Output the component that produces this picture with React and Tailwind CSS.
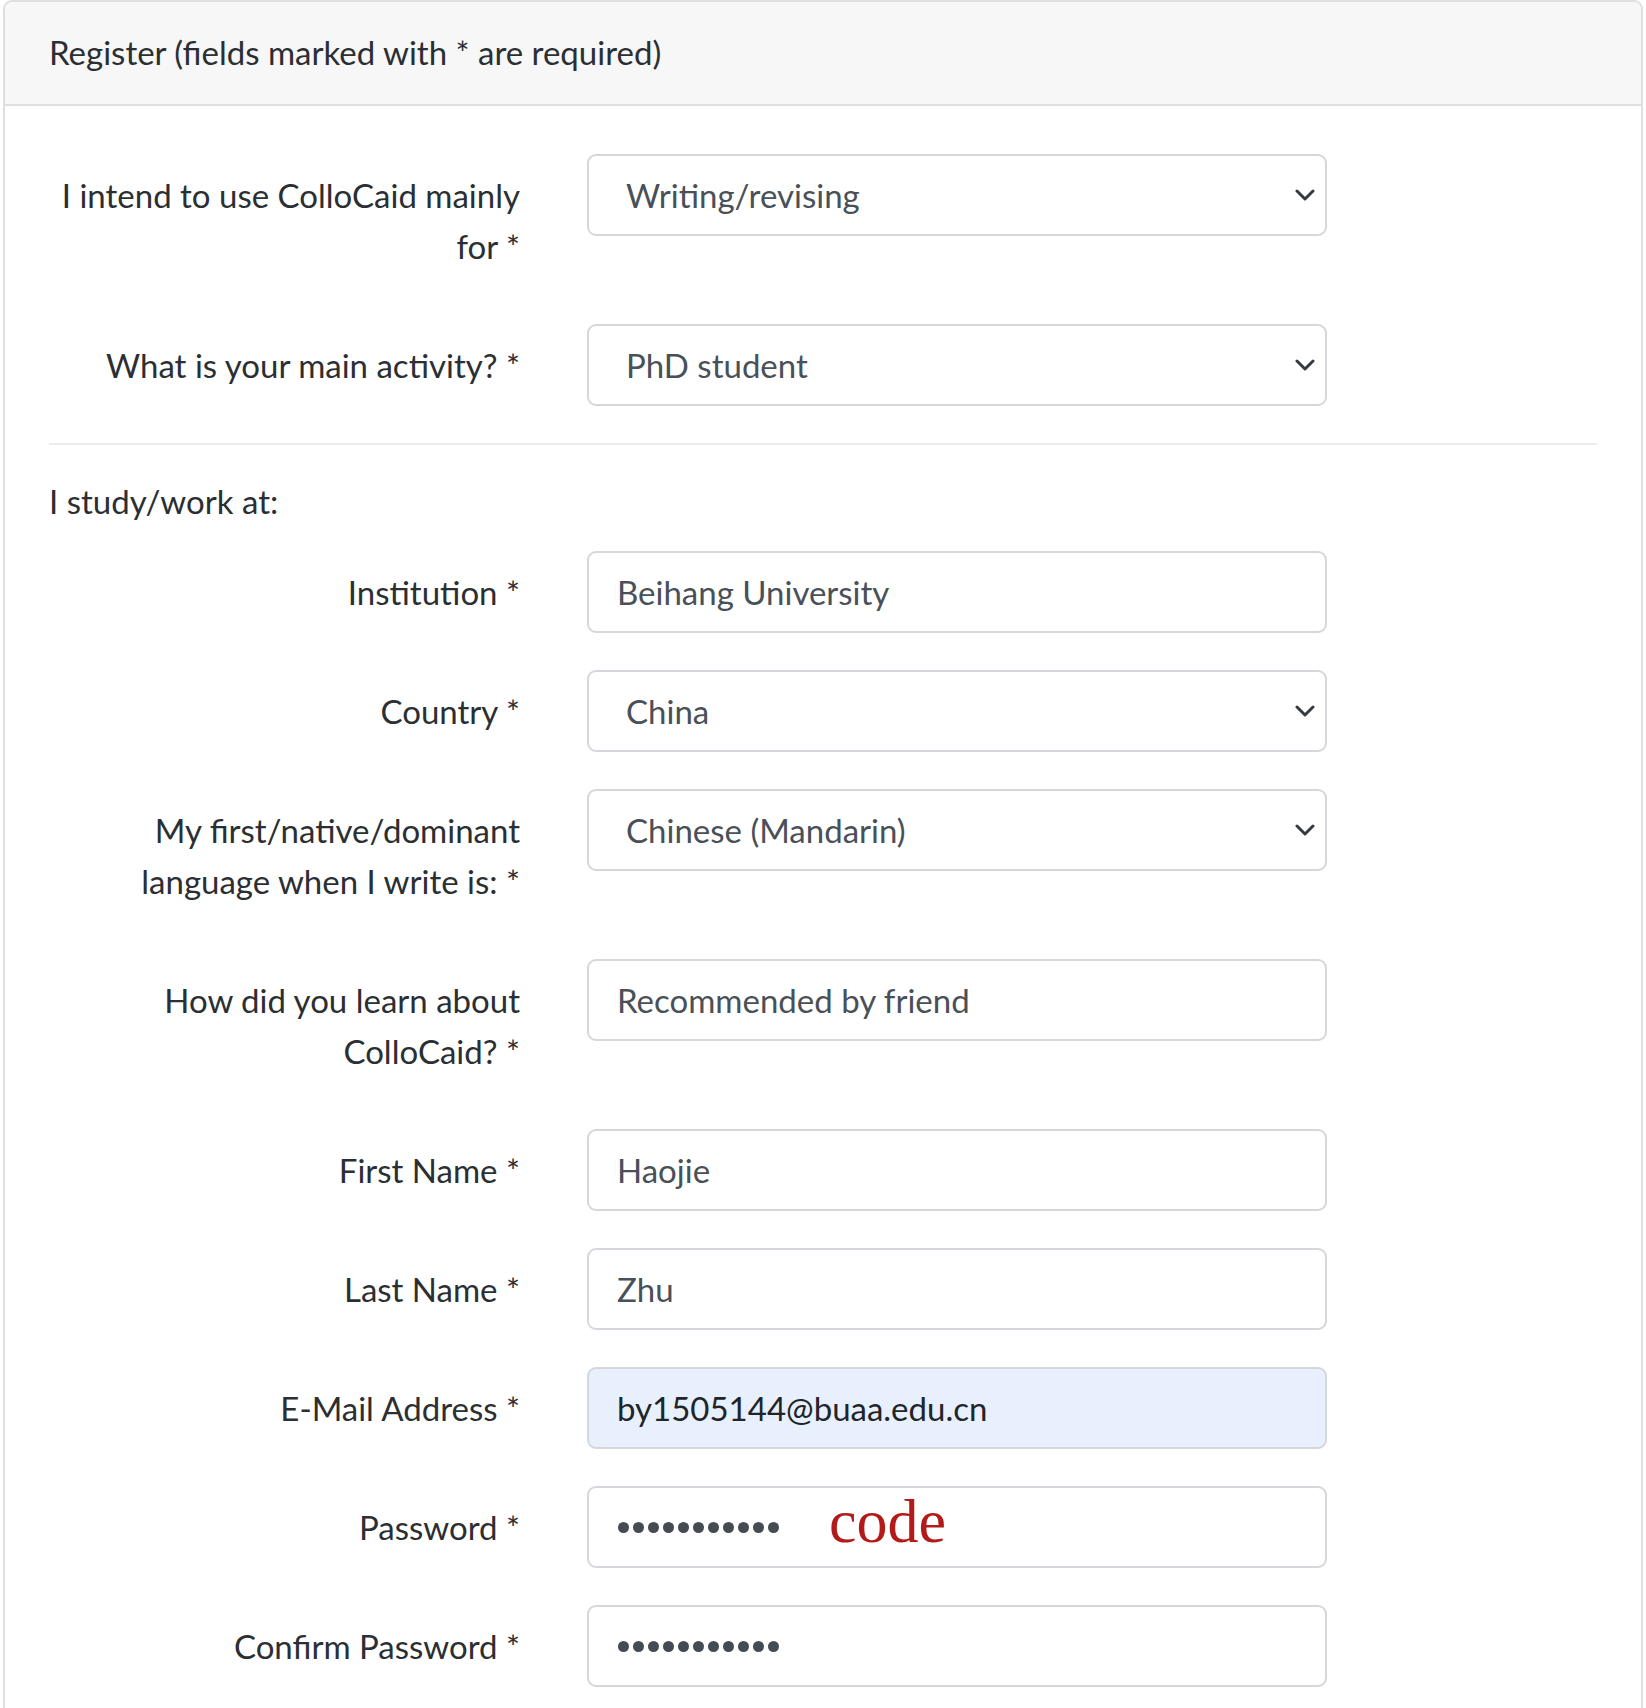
import React from 'react';

const Chevron = () => (
  <svg width="20" height="12" viewBox="0 0 20 12" className="absolute right-[10px] top-1/2 -translate-y-1/2">
    <path d="M2 2 L10 10 L18 2" fill="none" stroke="#343a40" strokeWidth="3" strokeLinecap="round" strokeLinejoin="round" />
  </svg>
);

const Field = ({ kind = 'text', value, autofill, children }) => {
  const base = 'relative w-[740px] h-[82px] rounded-[9px] border-2 border-[#d4d7db] flex items-center';
  if (kind === 'select') {
    return (
      <div className={`${base} bg-white pl-[37px] text-[#495057]`}>
        {value}
        <Chevron />
      </div>
    );
  }
  if (kind === 'password') {
    return (
      <div className={`${base} bg-white pl-[29px]`}>
        <div className="flex gap-[4px]">
          {Array.from({ length: 11 }).map((_, i) => (
            <span key={i} className="w-[11px] h-[11px] rounded-full bg-[#454b52]" />
          ))}
        </div>
        {children}
      </div>
    );
  }
  return (
    <div className={`${base} pl-[28px] ${autofill ? 'bg-[#e8f0fe] text-[#212529]' : 'bg-white text-[#495057]'}`}>
      {value}
    </div>
  );
};

const Row = ({ label, children, last }) => (
  <div className={`flex items-start ${last ? '' : 'mb-[36px]'}`}>
    <label className="w-[471px] shrink-0 text-right py-[16px]">{label}</label>
    <div className="ml-[67px]">{children}</div>
  </div>
);

export default function App() {
  return (
    <div
      className="bg-white min-h-[1708px] text-[33px] leading-[51px] text-[#2b2f33]"
      style={{ fontFamily: 'Lato, "Noto Sans", sans-serif' }}
    >
      <div className="ml-[3px] w-[1640px] border-2 border-b-0 border-[#dfdfdf] rounded-t-[9px] overflow-hidden">
        <div className="h-[104px] bg-[#f7f7f7] border-b-2 border-[#dfdfdf] flex items-center px-[44px] pb-[2px]">
          Register (fields marked with * are required)
        </div>

        <div className="px-[44px] pt-[48px] pb-[40px]">
          <Row label={<>I intend to use ColloCaid mainly<br />for *</>}>
            <Field kind="select" value="Writing/revising" />
          </Row>
          <Row label="What is your main activity? *">
            <Field kind="select" value="PhD student" />
          </Row>

          <hr className="border-0 border-t-2 border-[#ececec] mb-[31px]" />

          <p className="mb-[24px]">I study/work at:</p>

          <Row label="Institution *">
            <Field value="Beihang University" />
          </Row>
          <Row label="Country *">
            <Field kind="select" value="China" />
          </Row>
          <Row label={<>My first/native/dominant<br />language when I write is: *</>}>
            <Field kind="select" value="Chinese (Mandarin)" />
          </Row>
          <Row label={<>How did you learn about<br />ColloCaid? *</>}>
            <Field value="Recommended by friend" />
          </Row>
          <Row label="First Name *">
            <Field value="Haojie" />
          </Row>
          <Row label="Last Name *">
            <Field value="Zhu" />
          </Row>
          <Row label="E-Mail Address *">
            <Field value="by1505144@buaa.edu.cn" autofill />
          </Row>
          <Row label="Password *">
            <Field kind="password">
              <span
                className="absolute left-[240px] top-[2px] text-[62px] leading-none text-[#b31b1b]"
                style={{ fontFamily: '"Liberation Serif", serif' }}
              >
                code
              </span>
            </Field>
          </Row>
          <Row label="Confirm Password *" last>
            <Field kind="password" />
          </Row>
        </div>
      </div>
    </div>
  );
}
